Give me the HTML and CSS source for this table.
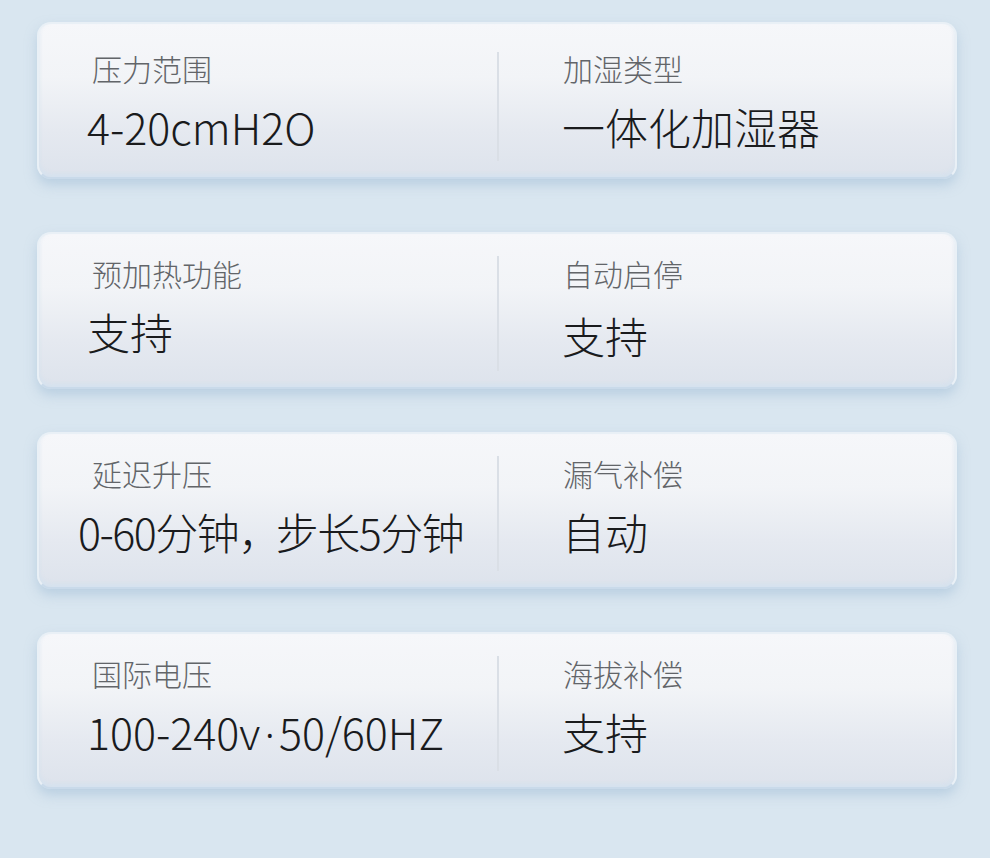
FILE: index.html
```html
<!DOCTYPE html>
<html lang="zh-CN">
<head>
<meta charset="utf-8">
<title>参数</title>
<link rel="stylesheet" href="styles.css">
</head>
<body>
<main class="page">
  <section class="card card-first">
    <div class="cell">
      <div class="label">压力范围</div>
      <div class="value">4-20cmH2O</div>
    </div>
    <div class="cell cell-right">
      <div class="label">加湿类型</div>
      <div class="value">一体化加湿器</div>
    </div>
  </section>
  <section class="card">
    <div class="cell">
      <div class="label">预加热功能</div>
      <div class="value">支持</div>
    </div>
    <div class="cell cell-right">
      <div class="label">自动启停</div>
      <div class="value value-low">支持</div>
    </div>
  </section>
  <section class="card">
    <div class="cell">
      <div class="label">延迟升压</div>
      <div class="value value-wide">0-60分钟<span class="comma">，</span>步长5分钟</div>
    </div>
    <div class="cell cell-right">
      <div class="label">漏气补偿</div>
      <div class="value">自动</div>
    </div>
  </section>
  <section class="card">
    <div class="cell">
      <div class="label">国际电压</div>
      <div class="value">100-240v<span class="dot">·</span>50/60HZ</div>
    </div>
    <div class="cell cell-right">
      <div class="label">海拔补偿</div>
      <div class="value">支持</div>
    </div>
  </section>
</main>
</body>
</html>
```

FILE: styles.css
```css
html, body {
  margin: 0;
  padding: 0;
}
body {
  background: #d9e6f0;
  font-family: "Noto Sans CJK SC", "Noto Sans", sans-serif;
  width: 990px;
  height: 858px;
  overflow: hidden;
}
.page {
  display: flex;
  flex-direction: column;
  gap: 43px;
  padding: 22px 33px 0 37px;
}
.card-first {
  margin-bottom: 10px;
}
.card {
  box-sizing: border-box;
  height: 157px;
  border-radius: 14px;
  border: 2px solid #e9f0f6;
  border-bottom-color: #c9daea;
  background: linear-gradient(180deg, #f6f7fa 0%, #f2f4f7 35%, #e5e9f0 70%, #dde3ec 100%);
  box-shadow: 0 6px 12px rgba(155, 185, 212, 0.5), inset 0 -3px 4px rgba(210, 225, 240, 0.7);
  display: grid;
  grid-template-columns: 458px 1fr;
}
.cell {
  padding: 19px 0 0 53px;
}
.card-first .cell {
  padding-top: 24px;
}
.cell-right {
  margin: 22px 0 16px 0;
  padding: 0 0 0 64px;
  border-left: 2px solid #dadfe6;
}
.card-first .cell-right {
  margin-top: 28px;
  padding-top: 0;
}
.card-first .cell-right .label {
  margin-top: -4px;
}
.cell-right .label {
  margin-top: -3px;
}
.label {
  font-size: 30px;
  font-weight: 300;
  line-height: 40px;
  color: #626569;
}
.value {
  font-size: 43px;
  font-weight: 300;
  line-height: 60px;
  color: #1a1b1d;
  margin-left: -5px;
  margin-top: 8px;
  white-space: nowrap;
}
.cell-right .value {
  margin-left: -1px;
}
.value-low {
  margin-top: 12px;
}
.value-wide {
  margin-left: -14px;
  letter-spacing: -1.5px;
}
.comma {
  margin-right: -4px;
}
.dot {
  font-family: "Noto Sans", sans-serif;
  padding: 0 4px;
}
```
